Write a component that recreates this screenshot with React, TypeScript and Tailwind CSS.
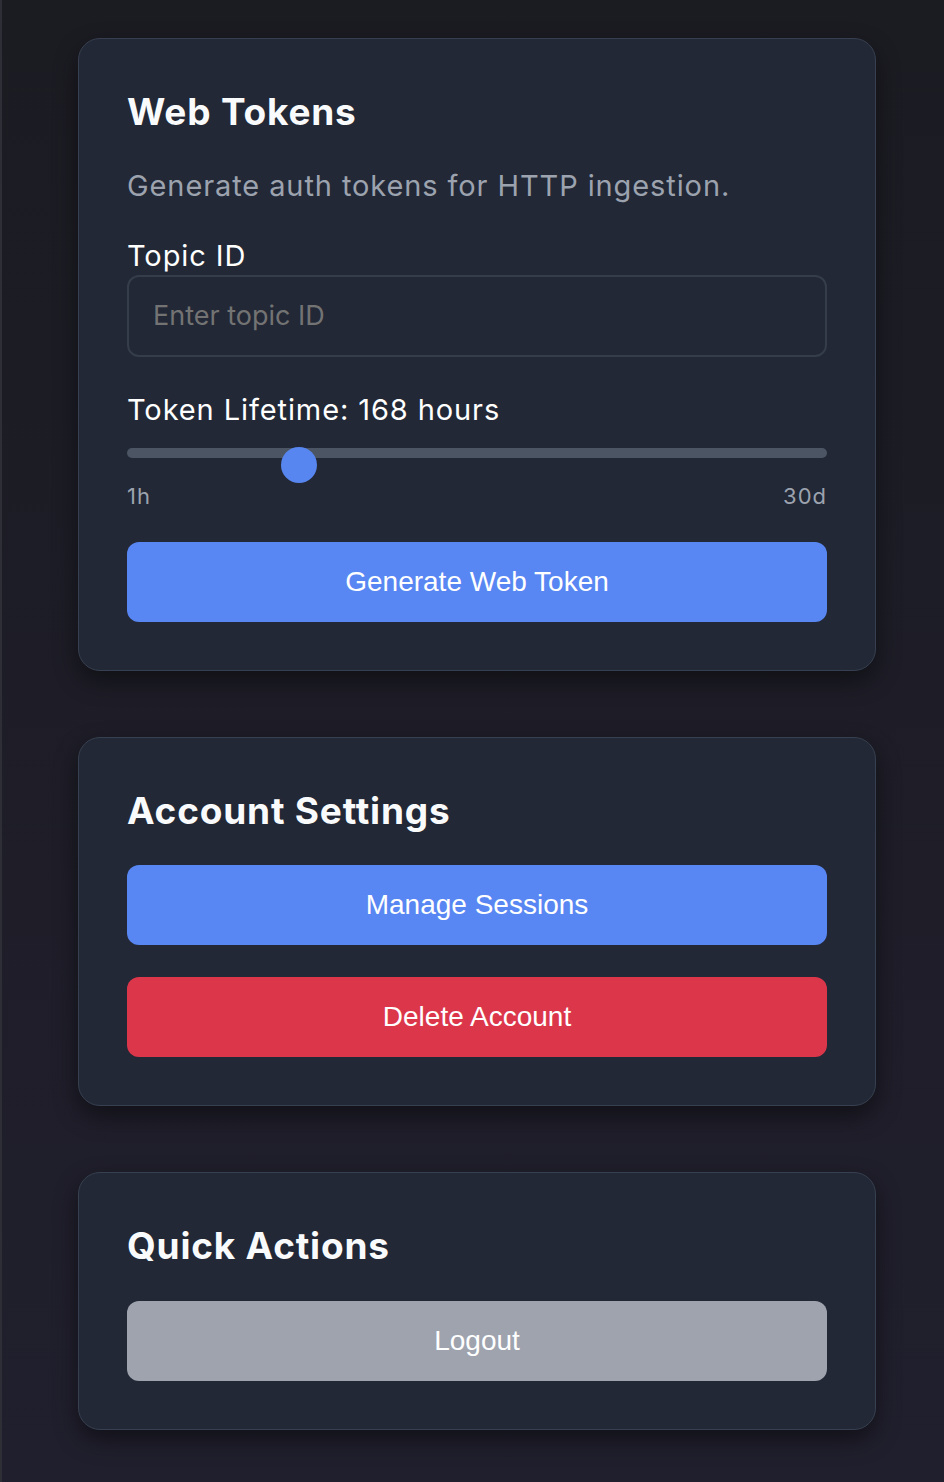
import React from "react";

const inter = { fontFamily: "Inter, 'Noto Sans', sans-serif" };

function Card({ children }: { children: React.ReactNode }) {
  return (
    <div className="w-[798px] rounded-[22px] border border-[#374050] bg-[#222836] p-12 shadow-[0_10px_24px_rgba(0,0,0,0.45)]">
      {children}
    </div>
  );
}

function Btn({ label, color }: { label: string; color: string }) {
  return (
    <button
      className={`flex h-[80px] w-full items-center justify-center rounded-[12px] text-[28px] text-white ${color}`}
      style={{ fontFamily: "'Liberation Sans', Arial, sans-serif" }}
    >
      {label}
    </button>
  );
}

function Title({ children }: { children: React.ReactNode }) {
  return (
    <h2 className="h-[50px] text-[37px] font-bold leading-[50px] tracking-[0.8px] text-[#f9fafb]">{children}</h2>
  );
}

export default function App() {
  return (
    <div
      className="min-h-[1482px] w-full border-l-2 border-[#2e2e36] bg-gradient-to-b from-[#1b1b22] to-[#201f2d]"
      style={inter}
    >
      <div className="flex flex-col gap-[66px] pl-[76px] pt-[38px] pb-[53px]">
        <Card>
          <div className="flex flex-col">
            <Title>Web Tokens</Title>
            <p className="mt-[29px] h-[40px] text-[29px] leading-[40px] tracking-[0.9px] text-[#9ca3af]">
              Generate auth tokens for HTTP ingestion.
            </p>
            <label className="mt-[30px] h-[39px] text-[29px] leading-[39px] tracking-[0.9px] text-white">Topic ID</label>
            <div className="flex h-[82px] items-center rounded-[12px] border-2 border-[#353c4a] px-[24px] text-[27px] text-[#737373]">
              Enter topic ID
            </div>
            <div className="mt-[33px] h-[40px] text-[29px] leading-[40px] tracking-[0.9px] text-white">
              Token Lifetime: 168 hours
            </div>
            <div className="relative mt-[18px] h-[10px] rounded-full bg-[#4b5563]">
              <div className="absolute left-[154px] top-[-1px] h-[36px] w-[36px] rounded-full bg-[#5886f0]" />
            </div>
            <div className="mt-[26px] flex h-[24px] items-center justify-between text-[22px] tracking-[1px] text-[#9ca3af]">
              <span>1h</span>
              <span>30d</span>
            </div>
            <div className="mt-[34px]">
              <Btn label="Generate Web Token" color="bg-[#5886f2]" />
            </div>
          </div>
        </Card>

        <Card>
          <div className="flex flex-col">
            <Title>Account Settings</Title>
            <div className="mt-[29px] flex flex-col gap-[32px]">
              <Btn label="Manage Sessions" color="bg-[#5886f2]" />
              <Btn label="Delete Account" color="bg-[#dc364b]" />
            </div>
          </div>
        </Card>

        <Card>
          <div className="flex flex-col">
            <Title>Quick Actions</Title>
            <div className="mt-[30px]">
              <Btn label="Logout" color="bg-[#9ea3ae]" />
            </div>
          </div>
        </Card>
      </div>
    </div>
  );
}
